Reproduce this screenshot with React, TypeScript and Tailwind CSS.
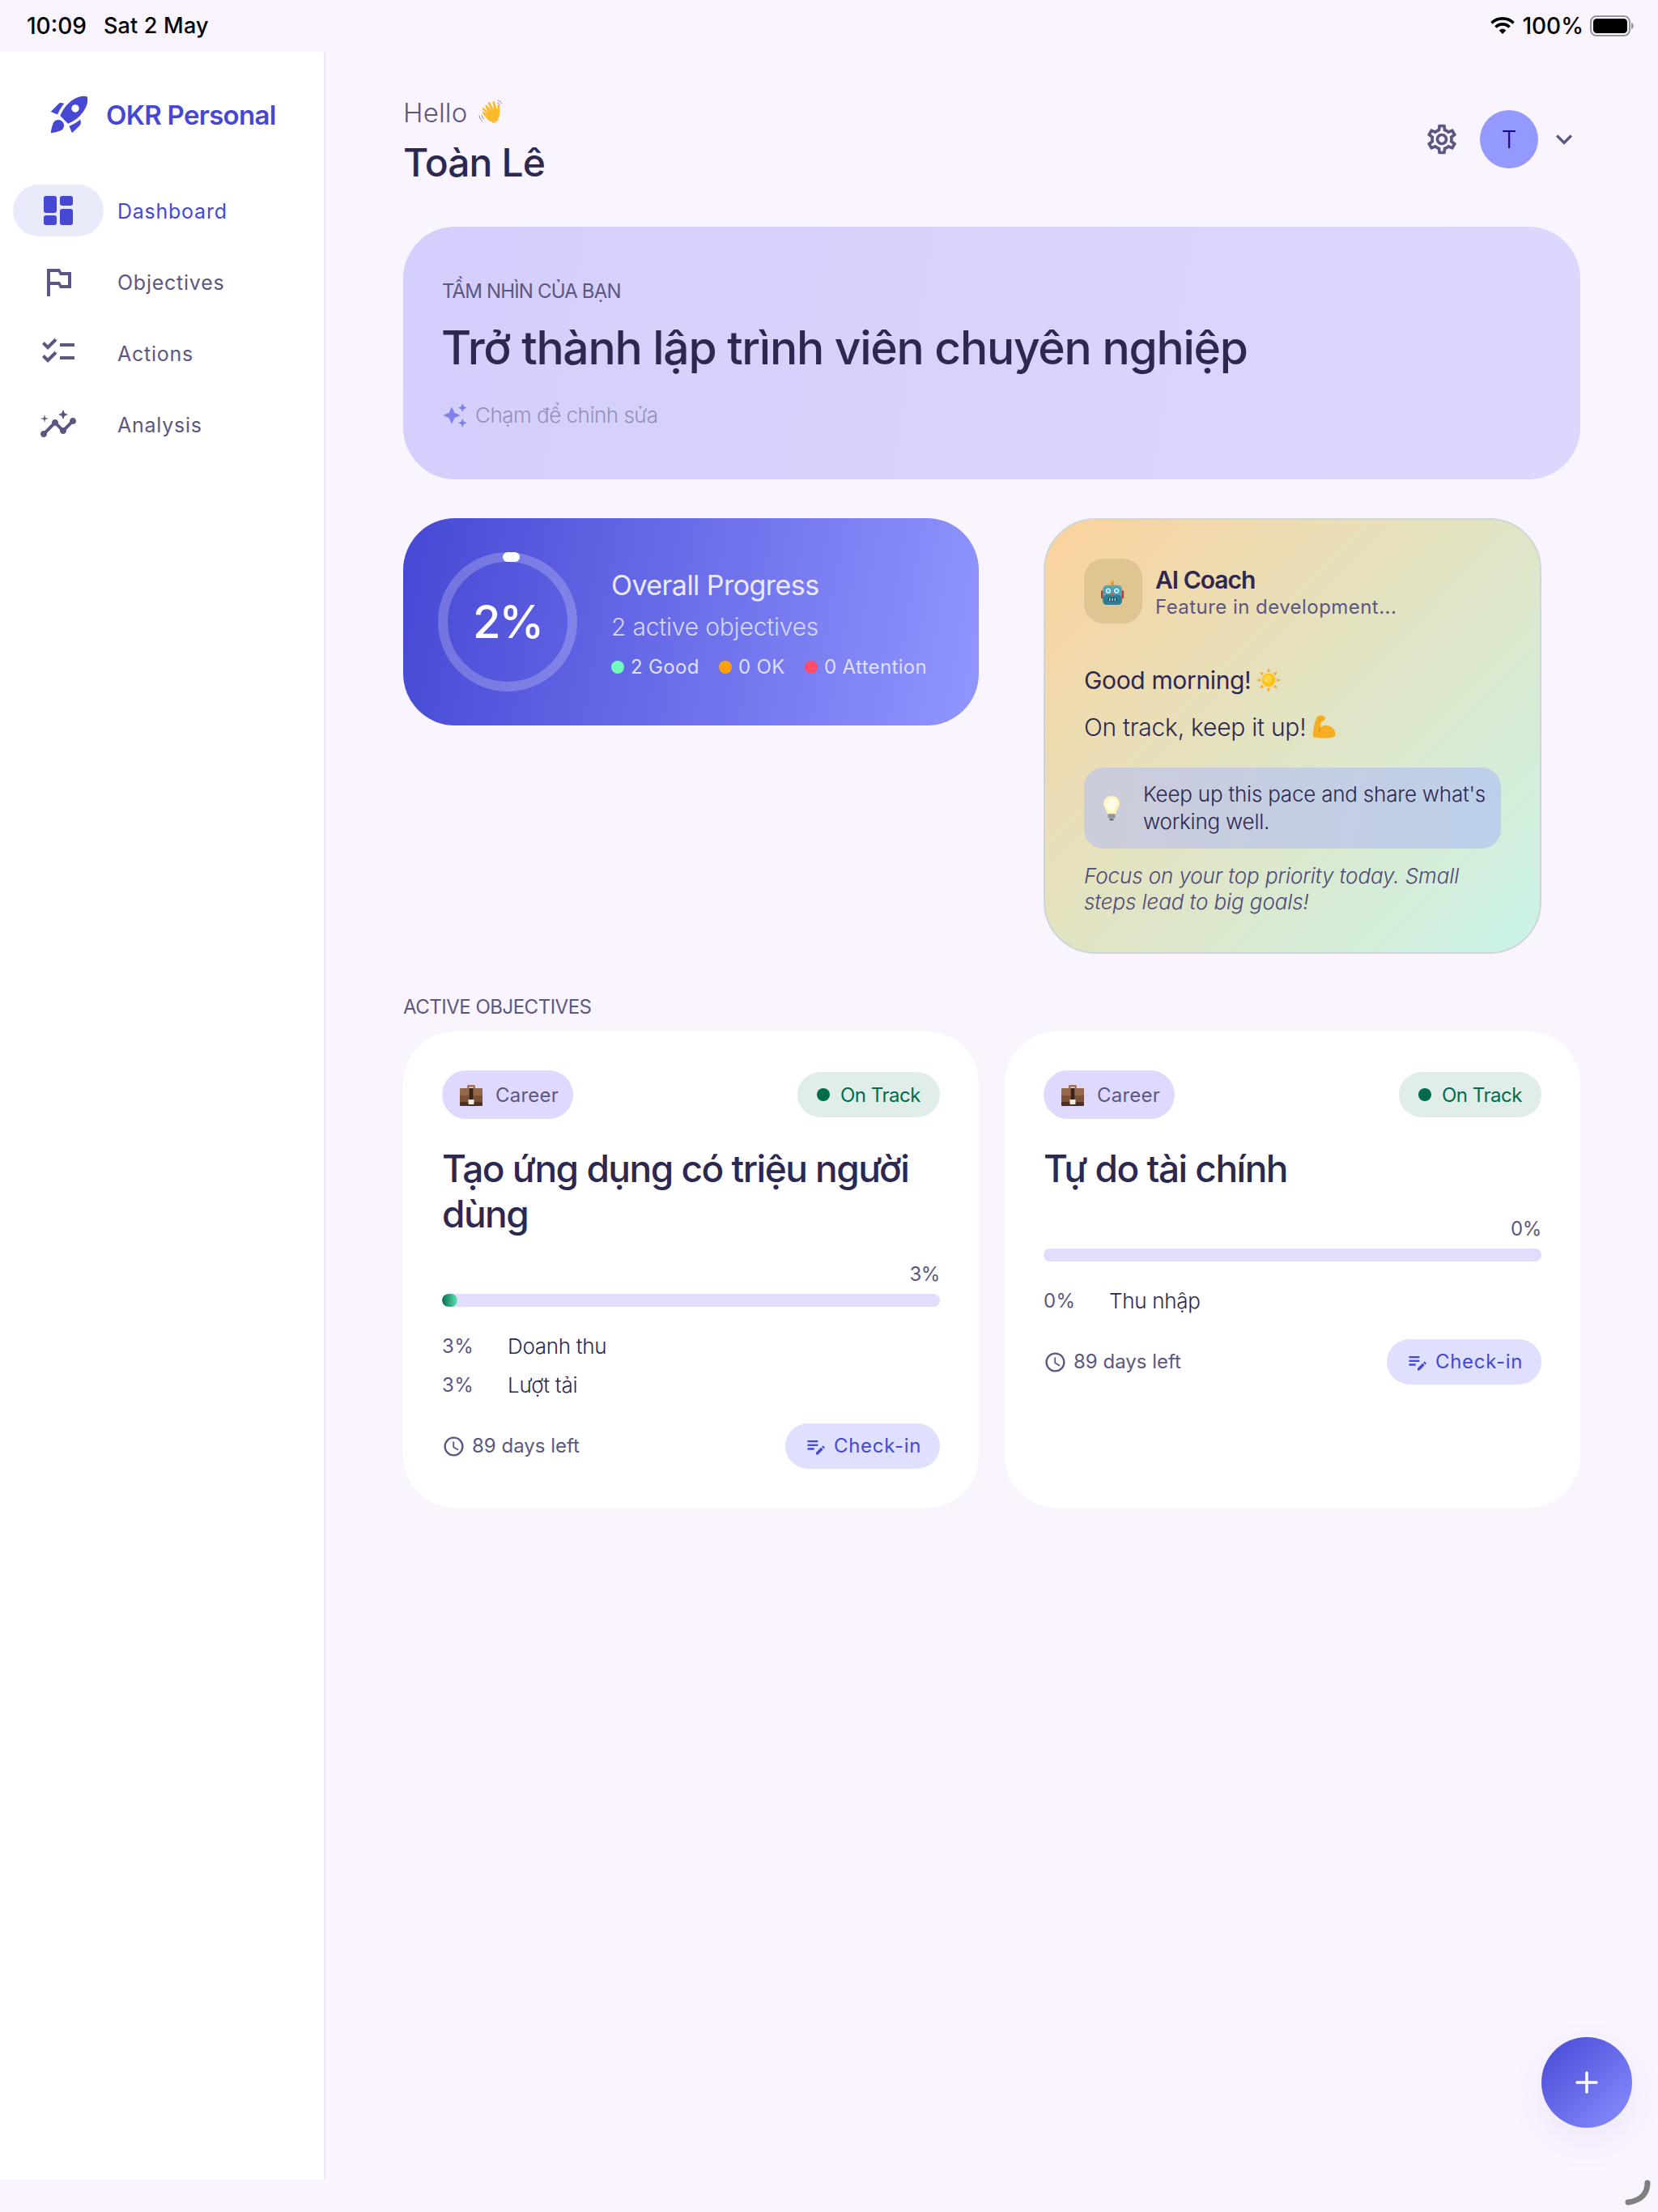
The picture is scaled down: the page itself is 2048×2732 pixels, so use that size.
import React from "react";

const P = ({ d, size, className }: { d: string; size: number; className?: string }) => (
  <svg width={size} height={size} viewBox="0 0 24 24" fill="currentColor" className={className}>
    <path d={d} />
  </svg>
);

const ICON = {
  rocket:
    "M9.19 6.35c-2.04 2.29-3.44 5.58-3.57 5.89L2 10.69l4.05-4.05c.47-.47 1.15-.68 1.81-.55l1.33.26zM11.17 17s3.74-1.55 5.89-3.7c5.4-5.4 4.5-9.62 4.21-10.57-.95-.3-5.17-1.19-10.57 4.21C8.55 9.09 7 12.83 7 12.83L11.17 17zm6.48-2.19c-2.29 2.04-5.58 3.44-5.89 3.57L13.31 22l4.05-4.05c.47-.47.68-1.15.55-1.81l-.26-1.33zM9 18c0 .83-.34 1.58-.88 2.12C6.94 21.3 2 22 2 22s.7-4.94 1.88-6.12C4.42 15.34 5.17 15 6 15c1.66 0 3 1.34 3 3zm4-9c0-1.1.9-2 2-2s2 .9 2 2-.9 2-2 2-2-.9-2-2z",
  flag: "M14 6l-1-2H5v17h2v-7h5l1 2h7V6h-6zm4 8h-4l-1-2H7V6h5l1 2h5v6z",
  checklist:
    "M22 7h-9v2h9V7zm0 8h-9v2h9v-2zM5.54 11L2 7.46l1.41-1.41 2.12 2.12 4.24-4.24 1.41 1.41L5.54 11zm0 8L2 15.46l1.41-1.41 2.12 2.12 4.24-4.24 1.41 1.41L5.54 19z",
  insights:
    "M21 8c-1.45 0-2.26 1.44-1.93 2.51l-3.55 3.56c-.3-.09-.74-.09-1.04 0l-2.55-2.55C12.27 10.45 11.46 9 10 9c-1.45 0-2.27 1.44-1.93 2.52l-4.56 4.55C2.44 15.74 1 16.55 1 18c0 1.1.9 2 2 2 1.45 0 2.26-1.44 1.93-2.51l4.55-4.56c.3.09.74.09 1.04 0l2.55 2.55C12.73 16.55 13.54 18 15 18c1.45 0 2.27-1.44 1.93-2.52l3.56-3.55C21.56 12.26 23 11.45 23 10c0-1.1-.9-2-2-2zM15 9l.94-2.07L18 6l-2.06-.93L15 3l-.92 2.07L12 6l2.08.93zM3.5 11L4 9l2-.5L4 8l-.5-2L3 8l-2 .5L3 9z",
  gear: "M19.43 12.98c.04-.32.07-.64.07-.98 0-.34-.03-.66-.07-.98l2.11-1.65c.19-.15.24-.42.12-.64l-2-3.46c-.09-.16-.26-.25-.44-.25-.06 0-.12.01-.17.03l-2.49 1c-.52-.4-1.08-.73-1.69-.98l-.38-2.65C14.46 2.18 14.25 2 14 2h-4c-.25 0-.46.18-.49.42l-.38 2.65c-.61.25-1.17.59-1.69.98l-2.49-1c-.06-.02-.12-.03-.18-.03-.17 0-.34.09-.43.25l-2 3.46c-.13.22-.07.49.12.64l2.11 1.65c-.04.32-.07.65-.07.98 0 .33.03.66.07.98l-2.11 1.65c-.19.15-.24.42-.12.64l2 3.46c.09.16.26.25.44.25.06 0 .12-.01.17-.03l2.49-1c.52.4 1.08.73 1.69.98l.38 2.65c.03.24.24.42.49.42h4c.25 0 .46-.18.49-.42l.38-2.65c.61-.25 1.17-.59 1.69-.98l2.49 1c.06.02.12.03.18.03.17 0 .34-.09.43-.25l2-3.46c.12-.22.07-.49-.12-.64l-2.11-1.65zm-1.98-1.71c.04.31.05.52.05.73 0 .21-.02.43-.05.73l-.14 1.13.89.7 1.08.84-.7 1.21-1.27-.51-1.04-.42-.9.68c-.43.32-.84.56-1.25.73l-1.06.43-.16 1.13-.2 1.35h-1.4l-.19-1.35-.16-1.13-1.06-.43c-.43-.18-.83-.41-1.23-.71l-.91-.7-1.06.43-1.27.51-.7-1.21 1.08-.84.89-.7-.14-1.13c-.03-.31-.05-.54-.05-.74s.02-.43.05-.73l.14-1.13-.89-.7-1.08-.84.7-1.21 1.27.51 1.04.42.9-.68c.43-.32.84-.56 1.25-.73l1.06-.43.16-1.13.2-1.35h1.39l.19 1.35.16 1.13 1.06.43c.43.18.83.41 1.23.71l.91.7 1.06-.43 1.27-.51.7 1.21-1.07.85-.89.7.14 1.13zM12 8c-2.21 0-4 1.79-4 4s1.79 4 4 4 4-1.79 4-4-1.79-4-4-4zm0 6c-1.1 0-2-.9-2-2s.9-2 2-2 2 .9 2 2-.9 2-2 2z",
  chevron: "M16.59 8.59 12 13.17 7.41 8.59 6 10l6 6 6-6z",
  sparkle:
    "M19 9l1.25-2.75L23 5l-2.75-1.25L19 1l-1.25 2.75L15 5l2.75 1.25L19 9zm-7.5.5L9 4 6.5 9.5 1 12l5.5 2.5L9 20l2.5-5.5L17 12l-5.5-2.5zM19 15l-1.25 2.75L15 19l2.75 1.25L19 23l1.25-2.75L23 19l-2.75-1.25L19 15z",
  clock:
    "M11.99 2C6.47 2 2 6.48 2 12s4.47 10 9.99 10C17.52 22 22 17.52 22 12S17.52 2 11.99 2zM12 20c-4.42 0-8-3.58-8-8s3.58-8 8-8 8 3.58 8 8-3.58 8-8 8zm.5-13H11v6l5.25 3.15.75-1.23-4.5-2.67z",
  editNote:
    "M3 10h11v2H3v-2zm0-2h11V6H3v2zm0 8h7v-2H3v2zm15.01-3.13.71-.71c.39-.39 1.02-.39 1.41 0l.71.71c.39.39.39 1.02 0 1.41l-.71.71-2.12-2.12zm-.71.71L12 18.88V21h2.12l5.3-5.3-2.12-2.12z",
};

const DashboardIcon = () => (
  <svg width="36" height="36" viewBox="0 0 36 36" fill="#4648d4">
    <rect x="0" y="0" width="16" height="21" rx="3" />
    <rect x="20" y="0" width="16" height="12" rx="3" />
    <rect x="0" y="24" width="16" height="12" rx="3" />
    <rect x="20" y="16" width="16" height="20" rx="3" />
  </svg>
);

const HandEmoji = () => (
  <svg width="34" height="34" viewBox="0 0 34 34" className="shrink-0">
    <g fill="none" stroke="#8c8a9c" strokeWidth="1" strokeLinecap="round">
      <path d="M2 21c.6 3 2 5.4 4 7M5 20c.5 2 1.3 3.6 2.6 5" />
      <path d="M25 2c2.4.6 4.2 2 5.2 4M24.4 5c1.4.4 2.4 1.2 3.2 2.4" />
    </g>
    <path
      fill="#fbb92c"
      d="M9.5 9.5c-.7-1.3 1-2.6 2.1-1.4l5 6.2-3.8-8.5c-.6-1.5 1.4-2.6 2.4-1.2l5.1 8.8-1.9-8.7c-.3-1.6 1.9-2.2 2.6-.7l3.2 9.9.2-5.7c.1-1.6 2.3-1.7 2.6 0 .6 4.4.8 9.5-.4 13.7-1.8 6-8 8.2-12.4 5.3-3-2-5.6-6.4-8-9.2-1-1.2.7-2.7 2-1.6l4.5 3.8L5.9 13c-.9-1.3.9-2.7 2-1.5l5 5.3z"
    />
    <path fill="none" stroke="#e59a13" strokeWidth=".8" d="M14 19c2-1.8 2.7-.8 3.4-2M18 29c3 .6 6-1 7.4-4" />
  </svg>
);

const RobotEmoji = () => (
  <svg width="30" height="32" viewBox="0 0 32 34" className="mt-1 shrink-0">
    <circle cx="15" cy="3.5" r="2.6" fill="#f2a72e" />
    <rect x="13.6" y="4" width="2.8" height="5" fill="#e0912a" />
    <rect x="0" y="14" width="4" height="11" rx="1.5" fill="#b5402f" />
    <rect x="26" y="14" width="4" height="11" rx="1.5" fill="#b5402f" />
    <rect x="2.5" y="7" width="25" height="26" rx="5" fill="#5ba6b5" />
    <rect x="2.5" y="20" width="25" height="13" rx="5" fill="#2f7d92" />
    <circle cx="9.5" cy="14.5" r="4.2" fill="#e8fbff" stroke="#2b6f85" strokeWidth="1" />
    <circle cx="20.5" cy="14.5" r="4.2" fill="#e8fbff" stroke="#2b6f85" strokeWidth="1" />
    <circle cx="9.5" cy="14.5" r="2" fill="#3ac0ea" />
    <circle cx="20.5" cy="14.5" r="2" fill="#3ac0ea" />
    <path d="M15 16.5l2.6 4.5h-5.2z" fill="#df4a39" />
    <rect x="9" y="24" width="12" height="4.5" rx="2.2" fill="#17495c" />
    <path d="M11.5 24.5v3.5M15 24.5v3.5M18.5 24.5v3.5" stroke="#e5eef0" strokeWidth="1.4" />
  </svg>
);

const SunEmoji = () => (
  <svg width="30" height="30" viewBox="0 0 30 30" className="shrink-0">
    <g fill="#f8a72c">
      <path d="M15 0l2 5h-4zM15 30l-2-5h4zM0 15l5-2v4zM30 15l-5 2v-4zM4.4 4.4l5 2-2.9 2.9zM25.6 25.6l-5-2 2.9-2.9zM25.6 4.4l-2 5-2.9-2.9zM4.4 25.6l2-5 2.9 2.9z" />
    </g>
    <circle cx="15" cy="15" r="8.4" fill="#fcc21b" />
    <circle cx="14" cy="13.5" r="5" fill="#ffd83f" />
  </svg>
);

const MuscleEmoji = () => (
  <svg width="30" height="30" viewBox="0 0 30 30" className="shrink-0">
    <path
      fill="#f5ae22"
      d="M2.5 28.5C.8 27.8.8 25.4 1 22.5 1.4 15.6 3 8 5.4 3c.9-1.8 2.6-2.7 4.6-2.6 2.2.1 5.2.8 5.8 2.7.5 1.7-.5 3.6-2.2 4.5-.9.5-1.5.1-2.1.9-1 1.5-1.7 5-1.3 7.3 1.3-2 4-3.2 7-3 4.2.3 9.2 3.3 10.7 7.7.8 2.5.7 5.2-.4 6-3.9 2.7-18.3 2.9-25 .5z"
    />
    <path fill="none" stroke="#d98a12" strokeWidth="1" d="M8 8c1.400-.5 2-1.800 1.600-3.400M9.600 15.800c-.7 2-1 3.800-.8 5.400" />
  </svg>
);

const BulbEmoji = () => (
  <svg width="22" height="32" viewBox="0 0 22 32" className="shrink-0">
    <path d="M11 1C5 1 1 5.200 1 10.600c0 4.600 3.800 7 4.600 12.400h10.800C17.200 17.600 21 15.200 21 10.600 21 5.200 17 1 11 1z" fill="#fff3b8" />
    <path d="M11 3.500c-4 0-7 3-7 7 0 3.500 3 6 4 10h6c1-4 4-6.500 4-10 0-4-3-7-7-7z" fill="#fffce6" />
    <rect x="6.500" y="23" width="9" height="6" rx="1.500" fill="#a8a8ac" />
    <path d="M6.500 25h9M6.500 27h9" stroke="#77777e" strokeWidth=".8" />
    <rect x="8.500" y="29" width="5" height="2.500" rx="1.200" fill="#6a6a72" />
  </svg>
);

const BriefcaseEmoji = () => (
  <svg width="30" height="30" viewBox="0 0 30 30" className="shrink-0">
    <path d="M10 8V4.500C10 3.500 10.800 3 11.800 3h6.400c1 0 1.800.5 1.800 1.500V8h-2.400V5.400h-5.200V8z" fill="#a67250" />
    <rect x="1" y="7" width="28" height="22" rx="2" fill="#7b5138" />
    <rect x="1" y="7" width="28" height="9" rx="2" fill="#96684a" />
    <rect x="1" y="24" width="28" height="5" rx="1.500" fill="#4c3021" />
    <rect x="12.700" y="7" width="4.600" height="14" fill="#3a241a" />
    <path d="M11.500 21h7v5a1 1 0 0 1-1 1h-5a1 1 0 0 1-1-1z" fill="#f0ece2" />
  </svg>
);

function Nav({
  label,
  active,
  children,
}: {
  label: string;
  active?: boolean;
  children: React.ReactNode;
}) {
  return (
    <div className="flex h-16 items-center">
      <div
        className={`ml-4 flex h-16 w-[112px] items-center justify-center rounded-full ${
          active ? "bg-[#e9ebfa] text-[#4648d4]" : "text-[#5c5782]"
        }`}
      >
        {children}
      </div>
      <span
        className={`ml-[17px] mt-[2px] text-[25px] leading-8 tracking-[0.75px] ${
          active ? "text-[#4648d4]" : "text-[#5c5782]"
        }`}
      >
        {label}
      </span>
    </div>
  );
}

function Legend({ dot, text, width }: { dot: string; text: string; width: string }) {
  return (
    <div className={`flex items-center gap-2 ${width}`}>
      <span className={`h-4 w-4 rounded-full ${dot}`} />
      <span className="whitespace-nowrap text-[24px] leading-8 tracking-[0.35px] text-[#dfdfff]">{text}</span>
    </div>
  );
}

function ObjectiveCard({
  title,
  pct,
  fill,
  krs,
}: {
  title: string;
  pct: string;
  fill?: boolean;
  krs: { p: string; name: string }[];
}) {
  return (
    <div className="h-[588px] rounded-[64px] bg-white px-12 pt-12">
      <div className="flex h-[60px] items-center justify-between">
        <div className="flex h-[60px] w-[162px] items-center rounded-full bg-[#e0d9ff] pl-[21px]">
          <BriefcaseEmoji />
          <span className="ml-[15px] mt-[2px] text-[24px] leading-8 tracking-[0.2px] text-[#5c5782]">Career</span>
        </div>
        <div className="flex h-14 w-[176px] items-center rounded-full bg-[#e1ede8] pl-6">
          <span className="h-4 w-4 rounded-full bg-[#006c4c]" />
          <span className="ml-[13px] mt-[2px] text-[24px] leading-8 tracking-[-0.5px] text-[#006c4c]">On Track</span>
        </div>
      </div>
      <h3 className="mt-[33px] text-[46px] font-medium leading-14 tracking-[-1.5px] text-[#2d2850]">{title}</h3>
      <div className="mt-[31px] text-right text-[24px] leading-8 tracking-[-0.4px] text-[#5c5782]">{pct}</div>
      <div className="mt-2 h-4 overflow-hidden rounded-full bg-[#e3ddfd]">
        {fill && <div className="h-4 w-[19px] rounded-full bg-[linear-gradient(90deg,#006c4c,#62e5b4)]" />}
      </div>
      <div className="mt-[33px] flex flex-col gap-4">
        {krs.map((k) => (
          <div key={k.name} className="flex h-8 items-center">
            <span className="w-[81px] text-[24px] leading-8 tracking-[0.4px] text-[#5c5782]">{k.p}</span>
            <span className="text-[26px] font-light leading-8 tracking-[-0.3px] text-[#2d2850]">{k.name}</span>
          </div>
        ))}
      </div>
      <div className="mt-[31px] flex h-14 items-center justify-between">
        <div className="flex items-center text-[#5c5782]">
          <P d={ICON.clock} size={29} />
          <span className="ml-[8px] text-[24px] leading-8 tracking-[0px]">89 days left</span>
        </div>
        <div className="flex h-14 w-[191px] items-center rounded-full bg-[#dfe0ff] pl-[24px] text-[#4648d4]">
          <P d={ICON.editNote} size={28} />
          <span className="ml-[8px] text-[24px] leading-8 tracking-[0.7px]">Check-in</span>
        </div>
      </div>
    </div>
  );
}

export default function App() {
  return (
    <div className="relative flex h-[2732px] w-[2048px] flex-col overflow-hidden bg-[#faf4ff] font-['Inter',sans-serif]">
      {/* status bar */}
      <div className="flex h-16 shrink-0 items-center pl-[33px] pr-[30px] text-black">
        <span className="text-[28px] font-medium leading-8">10:09</span>
        <span className="ml-[21px] text-[27px] font-medium leading-8 tracking-[0.2px]">Sat 2 May</span>
        <div className="ml-auto flex items-center">
          <svg width="30" height="24" viewBox="0 0 30 24" fill="none" stroke="#000" strokeWidth="3.6">
            <path d="M1.500 8.500C8.500 1 21.500 1 28.500 8.500" />
            <path d="M6.500 13.500c4.500-4.800 12.500-4.800 17 0" />
            <path d="M15 22l-4.300-4.600c2.300-2.200 6.300-2.200 8.600 0z" fill="#000" stroke="none" />
          </svg>
          <span className="ml-[9px] text-[28px] font-medium leading-8">100%</span>
          <svg width="54" height="26" viewBox="0 0 54 26" className="ml-2">
            <rect x="1" y="1" width="48" height="24" rx="7" fill="none" stroke="#98949c" strokeWidth="2" />
            <rect x="4" y="4" width="42" height="18" rx="4.500" fill="#000" />
            <path d="M51 9c1.600.4 2.800 2 2.800 4s-1.200 3.600-2.800 4z" fill="#98949c" />
          </svg>
        </div>
      </div>

      <div className="flex h-[2628px] shrink-0 overflow-hidden">
        {/* sidebar */}
        <aside className="h-full w-[402px] shrink-0 border-r-2 border-[#eee8fb] bg-white">
          <div className="mt-[49px] flex h-14 items-center pl-[58px] text-[#4648d4]">
            <P d={ICON.rocket} size={56} />
            <span className="ml-[17px] mt-[2px] text-[33px] font-semibold leading-10 tracking-[-0.7px]">OKR Personal</span>
          </div>
          <nav className="mt-[59px] flex flex-col gap-6">
            <Nav label="Dashboard" active>
              <DashboardIcon />
            </Nav>
            <Nav label="Objectives">
              <P d={ICON.flag} size={48} />
            </Nav>
            <Nav label="Actions">
              <P d={ICON.checklist} size={48} className="-mt-1" />
            </Nav>
            <Nav label="Analysis">
              <P d={ICON.insights} size={48} />
            </Nav>
          </nav>
        </aside>

        {/* main */}
        <main className="relative h-full flex-1 pl-[96px] pr-[96px] pt-[55px]">
          <header className="flex h-[112px] items-start justify-between">
            <div>
              <div className="flex h-10 items-center text-[#5c5782]">
                <span className="text-[33px] font-light leading-10 tracking-[0.2px]">Hello</span>
                <span className="ml-3">
                  <HandEmoji />
                </span>
              </div>
              <h1 className="mt-3 text-[48px] font-medium leading-[60px] tracking-[-0.9px] text-[#2d2850]">Toàn Lê</h1>
            </div>
            <div className="mt-[17px] flex items-center text-[#5c5782]">
              <P d={ICON.gear} size={44} />
              <div className="ml-[25px] flex h-[72px] w-[72px] items-center justify-center rounded-full bg-[#9499ff] text-[30px] font-light text-[#17009c]">
                T
              </div>
              <P d={ICON.chevron} size={40} className="ml-3" />
            </div>
          </header>

          <section className="mt-[49px] h-[312px] rounded-[64px] bg-[linear-gradient(100deg,#d4cefc,#dcd8fd)] px-12 pt-16">
            <div className="text-[24px] leading-8 tracking-[-0.85px] text-[#5c5782]">TẦM NHÌN CỦA BẠN</div>
            <h2 className="-ml-[1px] mt-[18px] text-[57px] font-medium leading-[72px] tracking-[-1.3px] text-[#2d2850]">
              Trở thành lập trình viên chuyên nghiệp
            </h2>
            <div className="mt-[29px] flex h-9 items-center">
              <P d={ICON.sparkle} size={32} className="text-[#7f80ea]" />
              <span className="ml-[9px] text-[26px] font-light leading-9 tracking-[-0.5px] text-[#9390bc]">Chạm để chỉnh sửa</span>
            </div>
          </section>

          <div className="mt-12 grid grid-cols-2 items-start gap-8">
            <section className="flex h-[256px] items-center rounded-[64px] bg-[linear-gradient(100deg,#4648d4,#9196ff)] pl-[43px]">
              <div className="relative h-[172px] w-[172px] shrink-0">
                <svg width="172" height="172" viewBox="0 0 172 172">
                  <circle cx="86" cy="86" r="80" fill="none" stroke="#ffffff" strokeOpacity="0.22" strokeWidth="12" />
                  <path d="M86 6h9" fill="none" stroke="#ffffff" strokeWidth="12" strokeLinecap="round" />
                </svg>
                <div className="absolute inset-0 flex items-center justify-center text-[56px] font-medium leading-none tracking-[-2px] text-white">
                  2%
                </div>
              </div>
              <div className="ml-[42px] mt-[4px]">
                <div className="text-[34px] leading-[44px] tracking-[-0.55px] text-[#ebe9ff]">Overall Progress</div>
                <div className="mt-[9px] text-[30px] font-light leading-10 tracking-[-0.2px] text-[#d6d6ff]">
                  2 active objectives
                </div>
                <div className="mt-[14px] flex items-center">
                  <Legend dot="bg-[#6ffbbe]" text="2 Good" width="w-[133px]" />
                  <Legend dot="bg-[#ff9f0a]" text="0 OK" width="w-[106px]" />
                  <Legend dot="bg-[#ff4d6d]" text="0 Attention" width="w-[152px]" />
                </div>
              </div>
            </section>

            <section className="mx-12 h-[538px] rounded-[64px] border-2 border-[#d0d6d6] bg-[linear-gradient(135deg,#fbd29c,#e1e4c4_50%,#caf4e8)] px-12 pt-12">
              <div className="flex items-center">
                <div className="flex h-20 w-[72px] items-center justify-center rounded-3xl bg-[#dec592]">
                  <RobotEmoji />
                </div>
                <div className="ml-4 mt-[2px]">
                  <div className="text-[30px] font-semibold leading-10 tracking-[-1px] text-[#2d2850]">AI Coach</div>
                  <div className="-mt-[2px] text-[24px] leading-8 tracking-[0.45px] text-[#5c5782]">
                    Feature in development...
                  </div>
                </div>
              </div>
              <div className="mt-[50px] flex h-10 items-center text-[30px] tracking-[-0.35px] text-[#2d2850]">
                <span>Good morning!</span>
                <span className="ml-[7px]">
                  <SunEmoji />
                </span>
              </div>
              <div className="mt-[18px] flex h-10 items-center text-[30px] font-light tracking-[-0.25px] text-[#2d2850]">
                <span>On track, keep it up!</span>
                <span className="ml-2">
                  <MuscleEmoji />
                </span>
              </div>
              <div className="mt-[30px] flex h-[100px] items-center rounded-3xl bg-[linear-gradient(100deg,#ccccd9,#bcd0ea)] pl-[23px]">
                <BulbEmoji />
                <div className="ml-[28px] w-[436px] text-[26px] font-light leading-[34px] tracking-[-0.22px] text-[#2d2850]">
                  Keep up this pace and share what's working well.
                </div>
              </div>
              <div className="mt-[18px] text-[26px] font-light italic leading-8 tracking-[-0.1px] text-[#4f4a78]">
                Focus on your top priority today. Small steps lead to big goals!
              </div>
            </section>
          </div>

          <div className="mb-[14px] mt-[50px] text-[24px] leading-8 tracking-[-0.5px] text-[#5c5782]">ACTIVE OBJECTIVES</div>
          <div className="grid grid-cols-2 gap-8">
            <ObjectiveCard
              title="Tạo ứng dụng có triệu người dùng"
              pct="3%"
              fill
              krs={[
                { p: "3%", name: "Doanh thu" },
                { p: "3%", name: "Lượt tải" },
              ]}
            />
            <ObjectiveCard title="Tự do tài chính" pct="0%" krs={[{ p: "0%", name: "Thu nhập" }]} />
          </div>

          <button className="absolute bottom-[64px] right-[32px] flex h-[112px] w-[112px] items-center justify-center rounded-full bg-[linear-gradient(135deg,#4648d4,#8a8fff)] shadow-[0_16px_48px_rgba(70,50,140,0.07)]">
            <svg width="28" height="28" viewBox="0 0 28 28" stroke="#fff" strokeWidth="3.500" strokeLinecap="round">
              <path d="M14 2v24M2 14h24" />
            </svg>
          </button>
        </main>
      </div>

      {/* home corner indicator */}
      <div className="flex flex-1 justify-end pr-2">
        <svg width="34" height="34" viewBox="0 0 34 34" fill="none" stroke="#808080" strokeWidth="7" strokeLinecap="round">
          <path d="M29 4c0 13-8 22-24 24" />
        </svg>
      </div>
    </div>
  );
}
